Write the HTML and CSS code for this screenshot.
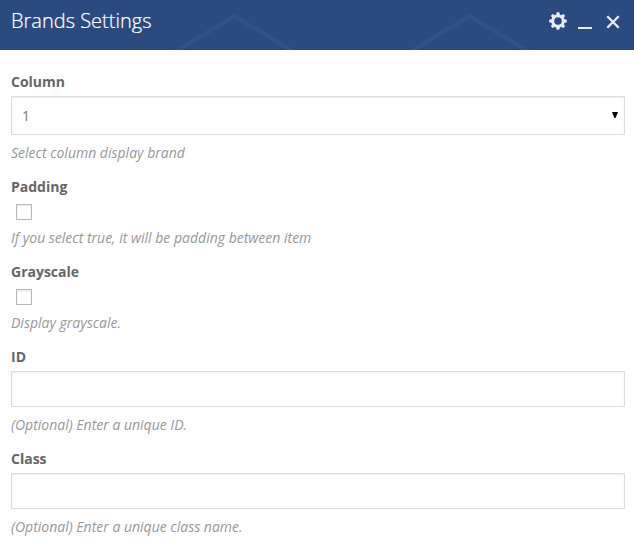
FILE: index.html
```html
<!DOCTYPE html>
<html lang="en">
<head>
<meta charset="utf-8">
<title>Brands Settings</title>
<link rel="stylesheet" href="styles.css">
</head>
<body>
<header class="panel-header">
  <svg class="pattern" viewBox="0 0 634 50" aria-hidden="true">
    <path d="M174 52.500L234.500 16L295 52.500M409 52.500L469.500 16L530 52.500"/>
  </svg>
  <h1 class="title">Brands Settings</h1>
  <div class="controls">
    <svg class="gear" viewBox="-9 -9 18 18" aria-label="Settings">
      <circle r="5.200" fill="none" stroke="currentColor" stroke-width="2.800"/>
      <g fill="currentColor">
        <path id="tooth" d="M-2 -6L-1.200 -8.800H1.200L2 -6Z"/>
        <use href="#tooth" transform="rotate(45)"/>
        <use href="#tooth" transform="rotate(90)"/>
        <use href="#tooth" transform="rotate(135)"/>
        <use href="#tooth" transform="rotate(180)"/>
        <use href="#tooth" transform="rotate(225)"/>
        <use href="#tooth" transform="rotate(270)"/>
        <use href="#tooth" transform="rotate(315)"/>
      </g>
    </svg>
    <span class="minimize"></span>
    <svg class="close" viewBox="0 0 14 14" aria-label="Close">
      <path d="M1.300 1.300L12.700 12.700M12.700 1.300L1.300 12.700"/>
    </svg>
  </div>
</header>
<main class="form">
  <section class="field">
    <div class="label">Column</div>
    <div class="box select"><span>1</span>
      <svg class="arrow" viewBox="0 0 6 6" aria-hidden="true"><path d="M0 0H6L3.500 6H2.500Z"/></svg>
    </div>
    <p class="hint">Select column display brand</p>
  </section>
  <section class="field">
    <div class="label">Padding</div>
    <div class="check"></div>
    <p class="hint">If you select true, it will be padding between item</p>
  </section>
  <section class="field">
    <div class="label">Grayscale</div>
    <div class="check"></div>
    <p class="hint">Display grayscale.</p>
  </section>
  <section class="field">
    <div class="label">ID</div>
    <div class="box"></div>
    <p class="hint">(Optional) Enter a unique ID.</p>
  </section>
  <section class="field">
    <div class="label">Class</div>
    <div class="box"></div>
    <p class="hint">(Optional) Enter a unique class name.</p>
  </section>
</main>
</body>
</html>
```
FILE: styles.css
```css
* {
  box-sizing: border-box;
}

body {
  margin: 0;
  background: #fff;
  color: #666;
  font: 14px/20px "Open Sans", sans-serif;
  overflow: hidden;
}

.panel-header {
  position: relative;
  display: flex;
  justify-content: space-between;
  height: 50px;
  padding: 0 14px 0 11px;
  background: #2b4b80;
  border-bottom: 1px solid #28467a;
  color: #e9edf4;
}

.pattern {
  position: absolute;
  top: 0;
  left: 0;
  width: 634px;
  height: 50px;
  fill: none;
  stroke: #315288;
  stroke-width: 4;
}

.title {
  position: relative;
  margin: 7px 0 0;
  color: #fff;
  font-size: 20px;
  font-weight: 300;
  line-height: 27px;
  -webkit-text-stroke: 0.2px #fff;
}

.controls {
  position: relative;
  display: flex;
  align-items: flex-start;
}

.gear {
  width: 18px;
  height: 18px;
  margin: 12px 11px 0 0;
}

.minimize {
  width: 14px;
  height: 2px;
  margin: 27px 14px 0 0;
  background: #e9edf4;
}

.close {
  width: 14px;
  height: 14px;
  margin-top: 15px;
  fill: none;
  stroke: currentColor;
  stroke-width: 2.300;
}

.form {
  display: flex;
  flex-direction: column;
  gap: 14px;
  padding: 22px 9px 0 11px;
}

.label {
  font-weight: 700;
  color: #666;
}

.box {
  height: 36px;
  margin-top: 4px;
  border: 1px solid #ddd;
  background: #fff;
  box-shadow: inset 0 1px 2px rgba(0, 0, 0, 0.07);
}

.select {
  display: flex;
  align-items: center;
  justify-content: space-between;
  height: 39px;
  padding: 0 6px 0 10px;
  color: #777;
}

.arrow {
  width: 6px;
  height: 6px;
  margin-bottom: 2px;
  fill: #000;
}

.check {
  width: 16px;
  height: 16px;
  margin: 7px 0 0 5px;
  border: 1px solid #b4b9be;
  box-shadow: inset 0 1px 2px rgba(0, 0, 0, 0.1);
}

.hint {
  margin: 8px 0 0;
  color: #999;
  font-style: italic;
}
```
